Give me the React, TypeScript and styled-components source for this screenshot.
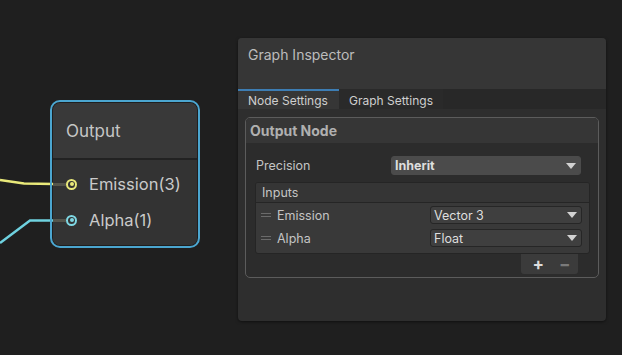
import React from "react";
import styled, { createGlobalStyle } from "styled-components";

const GlobalStyle = createGlobalStyle`
	html, body {
		margin: 0;
		padding: 0;
		background: #1f1f1f;
	}
	body {
		font-family: Inter, "Noto Sans", sans-serif;
	}
`;

const ports = [
	{ name: "Emission(3)", color: "#e9e97a" },
	{ name: "Alpha(1)", color: "#7fd8e4" },
];

const inputs = [
	{ name: "Emission", type: "Vector 3" },
	{ name: "Alpha", type: "Float" },
];

const Arrow = () => (
	<svg width="10" height="6" viewBox="0 0 10 6">
		<path d="M0 0 H10 L5 6 Z" fill="#d2d2d2" />
	</svg>
);

const App = () => {
	return (
		<Canvas>
			<GlobalStyle />

			<Wires width="60" height="260" viewBox="0 0 60 260">
				<path d="M0 180 L24 183.5 L54 184" stroke="#e9e97a" strokeWidth="2.4" fill="none" />
				<path d="M0 243 L30 220.5 L54 220.5" stroke="#6fd2e0" strokeWidth="2.4" fill="none" />
			</Wires>

			<Node>
				<NodeInner>
					<NodeHeader>Output</NodeHeader>
					<NodeBody>
						{ports.map((p) => (
							<PortRow key={p.name}>
								<Stub />
								<Port color={p.color} />
								<PortLabel>{p.name}</PortLabel>
							</PortRow>
						))}
					</NodeBody>
				</NodeInner>
			</Node>

			<Inspector>
				<InspectorTitle>Graph Inspector</InspectorTitle>

				<Tabs>
					<Tab active>Node Settings</Tab>
					<Tab>Graph Settings</Tab>
				</Tabs>

				<Content>
					<Section>
						<SectionHeader>Output Node</SectionHeader>
						<SectionBody>
							<FieldRow>
								<FieldLabel>Precision</FieldLabel>
								<Dropdown bold>
									<span>Inherit</span>
									<Arrow />
								</Dropdown>
							</FieldRow>

							<List>
								<ListHeader>Inputs</ListHeader>
								<ListBody>
									{inputs.map((item) => (
										<ListRow key={item.name}>
											<Handle>
												<i />
												<i />
											</Handle>
											<RowLabel>{item.name}</RowLabel>
											<Dropdown small>
												<span>{item.type}</span>
												<Arrow />
											</Dropdown>
										</ListRow>
									))}
								</ListBody>
							</List>
							<Footer>
								<Buttons>
									<span>+</span>
									<span className="minus">−</span>
								</Buttons>
							</Footer>
						</SectionBody>
					</Section>
				</Content>
			</Inspector>
		</Canvas>
	);
};

const Canvas = styled.div`
	position: relative;
	width: 622px;
	height: 355px;
	overflow: hidden;
	background: #1f1f1f;
`;

const Wires = styled.svg`
	position: absolute;
	left: 0;
	top: 0;
`;

const Node = styled.div`
	position: absolute;
	left: 50px;
	top: 100px;
	width: 150px;
	height: 148px;
	box-sizing: border-box;
	border: 2px solid #4ba6d0;
	border-radius: 10px;
	padding: 1px;
`;

const NodeInner = styled.div`
	display: flex;
	flex-direction: column;
	height: 100%;
	border-radius: 7px;
	overflow: hidden;
	background: #333333;
`;

const NodeHeader = styled.div`
	height: 55px;
	display: flex;
	align-items: center;
	padding-left: 13px;
	font-size: 17px;
	color: #c6c6c6;
	background: #393939;
	border-bottom: 2px solid #222222;
`;

const NodeBody = styled.div`
	display: flex;
	flex-direction: column;
	padding-top: 12px;
	gap: 12px;
	flex: 1;
	background: #333333;
`;

const PortRow = styled.div`
	display: flex;
	align-items: center;
	height: 24px;
`;

const Stub = styled.div`
	width: 13px;
	height: 3px;
	background: #55554c;
`;

const Port = styled.div<{ color: string }>`
	flex: none;
	width: 11px;
	height: 11px;
	box-sizing: border-box;
	border-radius: 50%;
	border: 2px solid ${(p) => p.color};
	display: flex;
	align-items: center;
	justify-content: center;
	margin-right: 12px;
	&::after {
		content: "";
		width: 4px;
		height: 4px;
		border-radius: 50%;
		background: ${(p) => p.color};
	}
`;

const PortLabel = styled.span`
	font-size: 16.5px;
	color: #cacaca;
`;

const Inspector = styled.div`
	position: absolute;
	left: 238px;
	top: 38px;
	width: 368px;
	height: 283px;
	display: flex;
	flex-direction: column;
	background: #2e2e2e;
	border-radius: 4px;
	overflow: hidden;
	box-shadow: 0 1px 3px rgba(0, 0, 0, 0.5);
`;

const InspectorTitle = styled.div`
	height: 51px;
	padding: 8px 0 0 10px;
	box-sizing: border-box;
	font-size: 14px;
	color: #bcbcbc;
	background: #363636;
`;

const Tabs = styled.div`
	display: flex;
	height: 20px;
	background: #282828;
`;

const Tab = styled.div<{ active?: boolean }>`
	display: flex;
	align-items: center;
	padding: 0 10px;
	box-sizing: border-box;
	width: ${(p) => (p.active ? "101px" : "auto")};
	font-size: 12px;
	color: #cfcfcf;
	background: ${(p) => (p.active ? "#363636" : "#2a2a2a")};
	border-top: 2px solid ${(p) => (p.active ? "#3d7db3" : "transparent")};
`;

const Content = styled.div`
	padding: 8px 7px;
	flex: 1;
`;

const Section = styled.div`
	border: 1px solid #5c5c5c;
	border-radius: 5px;
	overflow: hidden;
	height: 161px;
	box-sizing: border-box;
	background: #2c2c2c;
`;

const SectionHeader = styled.div`
	height: 25px;
	display: flex;
	align-items: center;
	padding-left: 4px;
	font-size: 14px;
	font-weight: 700;
	color: #b0b0b0;
	background: #363636;
`;

const SectionBody = styled.div`
	padding: 13px 10px 0 9px;
	display: flex;
	flex-direction: column;
`;

const FieldRow = styled.div`
	display: flex;
	align-items: center;
	justify-content: space-between;
	height: 19px;
	padding: 0 7px 0 1px;
`;

const FieldLabel = styled.span`
	font-size: 12.5px;
	color: #c4c4c4;
`;

const Dropdown = styled.div<{ bold?: boolean; small?: boolean }>`
	display: flex;
	align-items: center;
	justify-content: space-between;
	box-sizing: border-box;
	width: ${(p) => (p.small ? "152px" : "190px")};
	height: ${(p) => (p.small ? "18px" : "19px")};
	padding: 0 4px 0 3px;
	border-radius: 3px;
	font-size: 12.5px;
	font-weight: ${(p) => (p.bold ? 700 : 400)};
	color: #dedede;
	background: ${(p) => (p.small ? "#3f3f3f" : "#4b4b4b")};
	border: 1px solid ${(p) => (p.small ? "#262626" : "#4b4b4b")};
`;

const List = styled.div`
	margin-top: 7px;
	border-radius: 3px;
	overflow: hidden;
	background: #393939;
	border: 1px solid #252525;
	width: 335px;
	box-sizing: border-box;
`;

const ListHeader = styled.div`
	height: 19px;
	display: flex;
	align-items: center;
	padding-left: 6px;
	font-size: 12.5px;
	color: #c4c4c4;
	background: #353535;
	border-bottom: 1px solid #252525;
`;

const ListBody = styled.div`
	display: flex;
	flex-direction: column;
	gap: 5px;
	padding: 3px 7px 6px 0;
`;

const ListRow = styled.div`
	display: flex;
	align-items: center;
	height: 18px;
`;

const Handle = styled.div`
	display: flex;
	flex-direction: column;
	gap: 2px;
	width: 10px;
	margin: 0 6px 0 5px;
	i {
		display: block;
		height: 1px;
		background: #6a6a6a;
	}
`;

const RowLabel = styled.span`
	flex: 1;
	font-size: 12.5px;
	color: #c4c4c4;
`;

const Footer = styled.div`
	display: flex;
	justify-content: flex-end;
	padding-right: 10px;
`;

const Buttons = styled.div`
	display: flex;
	align-items: center;
	justify-content: space-around;
	width: 57px;
	height: 20px;
	padding-left: 4px;
	box-sizing: border-box;
	border-radius: 0 0 3px 3px;
	background: #3b3b3b;
	font-size: 17px;
	font-weight: 700;
	color: #dcdcdc;
	.minus {
		color: #7a7a7a;
	}
`;

export default App;
